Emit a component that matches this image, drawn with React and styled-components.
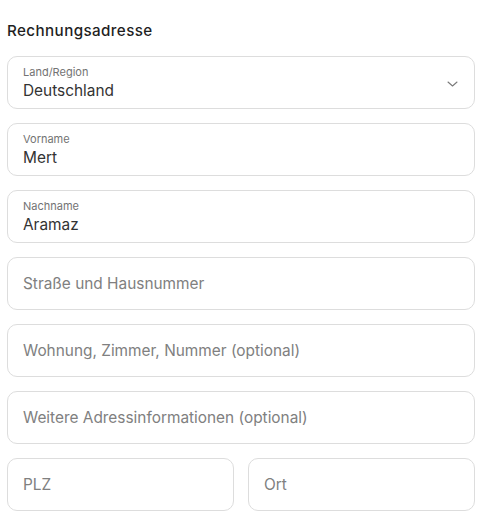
import styled, { createGlobalStyle } from 'styled-components';

const GlobalStyle = createGlobalStyle`
  body {
    margin: 0;
    background: #ffffff;
    font-family: Inter, "Noto Sans", sans-serif;
    color: #2b2b2b;
  }
`;

const Form = styled.form`
  padding: 22px 5px 0 7px;
  display: flex;
  flex-direction: column;
  gap: 14px;
`;

const Heading = styled.h2`
  margin: 0 0 2px;
  font-size: 15.2px;
  font-weight: 500;
  letter-spacing: 0.4px;
  line-height: 18px;
  color: #1f1f1f;
`;

const Row = styled.div`
  display: grid;
  grid-template-columns: 1fr 1fr;
  gap: 14px;
`;

const Field = styled.label`
  position: relative;
  height: 53px;
  box-sizing: border-box;
  border: 1px solid #dddddd;
  border-radius: 10px;
  padding: 0 15px;
  display: flex;
  flex-direction: column;
  justify-content: center;
  background: #fff;
`;

const Label = styled.span`
  font-size: 11px;
  line-height: 13px;
  margin-bottom: 2px;
  color: #737373;
`;

const Value = styled.span`
  font-size: 15.4px;
  line-height: 19px;
  color: ${(p) => (p.$placeholder ? '#808080' : '#333333')};
`;

const Chevron = styled.svg`
  position: absolute;
  right: 16px;
  top: 50%;
  margin-top: -2px;
`;

function TextField({ label, value, placeholder, select }) {
  return (
    <Field>
      {label && <Label>{label}</Label>}
      {value ? <Value>{value}</Value> : <Value $placeholder>{placeholder}</Value>}
      {select && (
        <Chevron width="11" height="6" viewBox="0 0 11 6" fill="none">
          <path d="M1 1l4.5 4L10 1" stroke="#7a7a7a" strokeWidth="1.1" strokeLinecap="round" strokeLinejoin="round" />
        </Chevron>
      )}
    </Field>
  );
}

export default function App() {
  return (
    <>
      <GlobalStyle />
      <Form>
        <Heading>Rechnungsadresse</Heading>
        <TextField label="Land/Region" value="Deutschland" select />
        <TextField label="Vorname" value="Mert" />
        <TextField label="Nachname" value="Aramaz" />
        <TextField placeholder="Straße und Hausnummer" />
        <TextField placeholder="Wohnung, Zimmer, Nummer (optional)" />
        <TextField placeholder="Weitere Adressinformationen (optional)" />
        <Row>
          <TextField placeholder="PLZ" />
          <TextField placeholder="Ort" />
        </Row>
      </Form>
    </>
  );
}
